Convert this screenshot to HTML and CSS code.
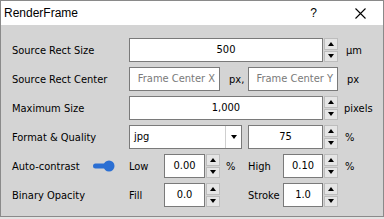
FILE: index.html
```html
<!DOCTYPE html>
<html>
<head>
<meta charset="utf-8">
<link rel="stylesheet" href="styles.css">
</head>
<body>
<div class="window">
  <div class="titlebar">
    <span class="title">RenderFrame</span>
    <span class="help">?</span>
    <svg class="close" width="11" height="11" viewBox="0 0 11 11"><path d="M0.5 0.5 L10.5 10.5 M10.5 0.5 L0.5 10.5" stroke="#000" stroke-width="1.1" fill="none"/></svg>
  </div>
  <div class="content">
    <div class="row">
      <span class="label">Source Rect Size</span>
      <div class="field w-wide center">500</div>
      <div class="spin"><div class="btn"><i class="up"></i></div><div class="btn"><i class="down"></i></div></div>
      <span class="unit u-um">μm</span>
    </div>
    <div class="row">
      <span class="label">Source Rect Center</span>
      <div class="field w-cx ph">Frame Center X</div>
      <span class="unit u-pxc">px,</span>
      <div class="field w-cy ph">Frame Center Y</div>
      <span class="unit u-px">px</span>
    </div>
    <div class="row">
      <span class="label">Maximum Size</span>
      <div class="field w-wide center">1,000</div>
      <div class="spin"><div class="btn"><i class="up"></i></div><div class="btn"><i class="down"></i></div></div>
      <span class="unit u-pix">pixels</span>
    </div>
    <div class="row">
      <span class="label">Format &amp; Quality</span>
      <div class="combo"><span class="combo-text">jpg</span><span class="combo-arrow"><i class="down"></i></span></div>
      <div class="field w-q center">75</div>
      <div class="spin"><div class="btn"><i class="up"></i></div><div class="btn"><i class="down"></i></div></div>
      <span class="unit u-pct">%</span>
    </div>
    <div class="row">
      <span class="label label-toggle">Auto-contrast
        <svg class="toggle" width="22" height="12" viewBox="0 0 22 12"><rect x="0" y="3.5" width="14" height="5" rx="2.5" fill="#2b6fd3"/><circle cx="16" cy="6" r="5.5" fill="#2b6fd3"/></svg>
      </span>
      <span class="sub">Low</span>
      <div class="field w-s center">0.00</div>
      <div class="spin"><div class="btn"><i class="up"></i></div><div class="btn"><i class="down"></i></div></div>
      <span class="mid">%</span>
      <span class="sub">High</span>
      <div class="field w-s2 center">0.10</div>
      <div class="spin"><div class="btn"><i class="up"></i></div><div class="btn"><i class="down"></i></div></div>
      <span class="unit u-pct">%</span>
    </div>
    <div class="row">
      <span class="label">Binary Opacity</span>
      <span class="sub">Fill</span>
      <div class="field w-s center">0.0</div>
      <div class="spin"><div class="btn"><i class="up"></i></div><div class="btn"><i class="down"></i></div></div>
      <span class="mid"></span>
      <span class="sub">Stroke</span>
      <div class="field w-s2 center">1.0</div>
      <div class="spin"><div class="btn"><i class="up"></i></div><div class="btn"><i class="down"></i></div></div>
    </div>
  </div>
</div>
</body>
</html>
```

FILE: styles.css
```css
html, body {
  margin: 0;
  padding: 0;
  background: #e3e3e3;
}
body {
  font-family: "DejaVu Sans Condensed", "Liberation Sans", sans-serif;
  font-stretch: condensed;
  font-size: 11px;
  color: #000;
}
.window {
  width: 384px;
  height: 217px;
  box-sizing: border-box;
  border: 1px solid #8a8a8a;
  background: #d4d4d4;
  display: flex;
  flex-direction: column;
}
.titlebar {
  height: 24px;
  background: #fff;
  display: flex;
  align-items: center;
  position: relative;
}
.title {
  margin-left: 3px;
  font-size: 12px;
  font-family: "Liberation Sans", sans-serif;
  font-stretch: normal;
}
.help {
  margin-left: auto;
  font-family: "Liberation Sans", sans-serif;
  font-size: 12px;
  margin-right: 38px;
}
.close {
  margin-right: 17px;
}
.content {
  padding: 13px 0 0 11px;
  display: flex;
  flex-direction: column;
  gap: 5px;
}
.row {
  display: flex;
  align-items: center;
  height: 24px;
}
.label {
  width: 117px;
  flex: none;
}
.label-toggle {
  display: flex;
  align-items: center;
}
.toggle {
  margin-left: auto;
  margin-right: 14px;
}
.field {
  height: 24px;
  box-sizing: border-box;
  border: 1px solid #7a7a7a;
  background: #fff;
  line-height: 22px;
  flex: none;
  overflow: hidden;
  white-space: nowrap;
}
.center { text-align: center; }
.ph {
  color: #7a7a7a;
  text-align: right;
  padding-right: 4px;
}
.w-wide { width: 194px; }
.w-cx { width: 91px; }
.w-cy { width: 90px; }
.w-q { width: 75px; margin-left: 6px; }
.w-s { width: 41px; }
.w-s2 { width: 40px; }
.spin {
  width: 14px;
  height: 24px;
  margin-left: 1px;
  display: flex;
  flex-direction: column;
  gap: 1px;
  flex: none;
}
.btn {
  flex: 1;
  box-sizing: border-box;
  background: #e5e5e5;
  border: 1px solid #bdbdbd;
  display: flex;
  align-items: center;
  justify-content: center;
}
i.up, i.down {
  display: block;
  width: 0;
  height: 0;
  border-left: 3.5px solid transparent;
  border-right: 3.5px solid transparent;
}
i.up { border-bottom: 4px solid #000; }
i.down { border-top: 4px solid #000; }
.unit { flex: none; }
.u-um { margin-left: 8px; }
.u-pxc { margin-left: 9px; width: 19px; }
.u-px { margin-left: 9px; }
.u-pix { margin-left: 6px; }
.u-pct { margin-left: 7px; }
.combo {
  width: 113px;
  height: 24px;
  box-sizing: border-box;
  border: 1px solid #7a7a7a;
  background: #fff;
  display: flex;
  flex: none;
}
.combo-text {
  flex: 1;
  padding-left: 4px;
  line-height: 22px;
}
.combo-arrow {
  width: 15px;
  border-left: 1px solid #cfcfcf;
  display: flex;
  align-items: center;
  justify-content: center;
}
.sub {
  width: 35px;
  flex: none;
}
.mid {
  width: 22px;
  padding-left: 6px;
  flex: none;
}
```
